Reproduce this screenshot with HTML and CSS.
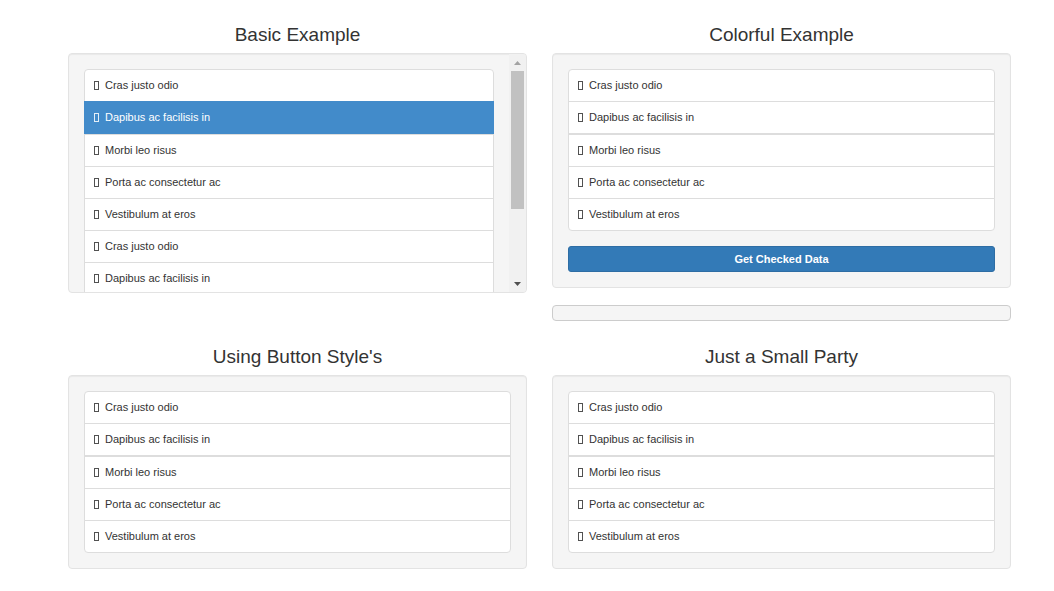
FILE: index.html
```html
<!DOCTYPE html>
<html>
<head>
<meta charset="utf-8">
<link rel="stylesheet" href="styles.css">
</head>
<body>
<div class="page">
  <section class="col">
    <h3 class="title">Basic Example</h3>
    <div class="well scrollwell">
      <div class="viewport">
        <ul class="list">
          <li class="item"><span class="ico"></span>Cras justo odio</li>
          <li class="item active split"><span class="ico"></span>Dapibus ac facilisis in</li>
          <li class="item"><span class="ico"></span>Morbi leo risus</li>
          <li class="item"><span class="ico"></span>Porta ac consectetur ac</li>
          <li class="item"><span class="ico"></span>Vestibulum at eros</li>
          <li class="item"><span class="ico"></span>Cras justo odio</li>
          <li class="item"><span class="ico"></span>Dapibus ac facilisis in</li>
          <li class="item"><span class="ico"></span>Morbi leo risus</li>
          <li class="item"><span class="ico"></span>Porta ac consectetur ac</li>
          <li class="item"><span class="ico"></span>Vestibulum at eros</li>
        </ul>
      </div>
      <div class="sbar">
        <div class="sb-btn"><svg width="7" height="4" viewBox="0 0 7 4"><polygon points="0,4 7,4 3.5,0" fill="#a3a3a3"/></svg></div>
        <div class="sb-track"><div class="sb-thumb"></div></div>
        <div class="sb-btn"><svg width="7" height="4" viewBox="0 0 7 4"><polygon points="0,0 7,0 3.5,4" fill="#505050"/></svg></div>
      </div>
    </div>
  </section>
  <section class="col">
    <h3 class="title">Colorful Example</h3>
    <div class="well">
      <ul class="list">
        <li class="item"><span class="ico"></span>Cras justo odio</li>
        <li class="item split"><span class="ico"></span>Dapibus ac facilisis in</li>
        <li class="item"><span class="ico"></span>Morbi leo risus</li>
        <li class="item"><span class="ico"></span>Porta ac consectetur ac</li>
        <li class="item"><span class="ico"></span>Vestibulum at eros</li>
      </ul>
      <button class="btn" type="button">Get Checked Data</button>
    </div>
    <div class="output"></div>
  </section>
  <section class="col">
    <h3 class="title">Using Button Style's</h3>
    <div class="well">
      <ul class="list">
        <li class="item"><span class="ico"></span>Cras justo odio</li>
        <li class="item split"><span class="ico"></span>Dapibus ac facilisis in</li>
        <li class="item"><span class="ico"></span>Morbi leo risus</li>
        <li class="item"><span class="ico"></span>Porta ac consectetur ac</li>
        <li class="item"><span class="ico"></span>Vestibulum at eros</li>
      </ul>
    </div>
  </section>
  <section class="col">
    <h3 class="title">Just a Small Party</h3>
    <div class="well">
      <ul class="list">
        <li class="item"><span class="ico"></span>Cras justo odio</li>
        <li class="item split"><span class="ico"></span>Dapibus ac facilisis in</li>
        <li class="item"><span class="ico"></span>Morbi leo risus</li>
        <li class="item"><span class="ico"></span>Porta ac consectetur ac</li>
        <li class="item"><span class="ico"></span>Vestibulum at eros</li>
      </ul>
    </div>
  </section>
</div>
</body>
</html>
```

FILE: styles.css
```css
html, body {
  margin: 0;
  padding: 0;
  background: #fff;
}
body {
  font-family: "Liberation Sans", Arial, sans-serif;
  color: #333;
}
.page {
  display: grid;
  grid-template-columns: 459px 459px;
  column-gap: 25px;
  row-gap: 24px;
  padding: 23px 0 0 68px;
  align-items: start;
}
.col {
  display: flex;
  flex-direction: column;
}
.title {
  margin: 0 0 6px;
  height: 24px;
  line-height: 24px;
  font-size: 19px;
  font-weight: 400;
  text-align: center;
  color: #333;
}
.well {
  background: #f5f5f5;
  border: 1px solid #e3e3e3;
  border-radius: 4px;
  box-shadow: inset 0 1px 1px rgba(0,0,0,.05);
  padding: 15px;
}
.scrollwell {
  display: flex;
  padding: 0;
  height: 238px;
  overflow: hidden;
}
.viewport {
  flex: 1;
  min-width: 0;
  overflow: hidden;
  padding: 15px;
}
.sbar {
  width: 17px;
  flex: none;
  display: flex;
  flex-direction: column;
  background: #f1f1f1;
}
.sb-btn {
  height: 17px;
  flex: none;
  display: flex;
  align-items: center;
  justify-content: center;
}
.sb-btn svg {
  display: block;
}
.sb-track {
  flex: 1;
}
.sb-thumb {
  height: 138px;
  margin: 0 2px;
  background: #c1c1c1;
}
.list {
  list-style: none;
  margin: 0;
  padding: 0;
}
.item {
  display: flex;
  align-items: center;
  height: 31px;
  padding: 0 9px;
  background: #fff;
  border: 1px solid #ddd;
  margin-bottom: -1px;
  font-size: 11px;
  line-height: 17px;
  color: #333;
  position: relative;
  white-space: nowrap;
}
.item:first-child {
  border-top-left-radius: 4px;
  border-top-right-radius: 4px;
}
.item:last-child {
  margin-bottom: 0;
  border-bottom-left-radius: 4px;
  border-bottom-right-radius: 4px;
}
.item.split {
  margin-bottom: 0;
}
.item.active {
  background: #428bca;
  border-color: #428bca;
  color: #fff;
  z-index: 1;
}
.ico {
  display: inline-block;
  box-sizing: border-box;
  width: 5px;
  height: 9px;
  border: 1px solid currentColor;
  margin-right: 6px;
  opacity: .85;
}
.btn {
  display: block;
  width: 100%;
  margin-top: 15px;
  height: 26px;
  background: #337ab7;
  border: 1px solid #2e6da4;
  border-radius: 3px;
  color: #fff;
  font-family: "Liberation Sans", Arial, sans-serif;
  font-size: 11px;
  font-weight: 700;
  padding: 0;
}
.output {
  margin-top: 17px;
  height: 14px;
  background: #f5f5f5;
  border: 1px solid #ccc;
  border-radius: 4px;
}
```
